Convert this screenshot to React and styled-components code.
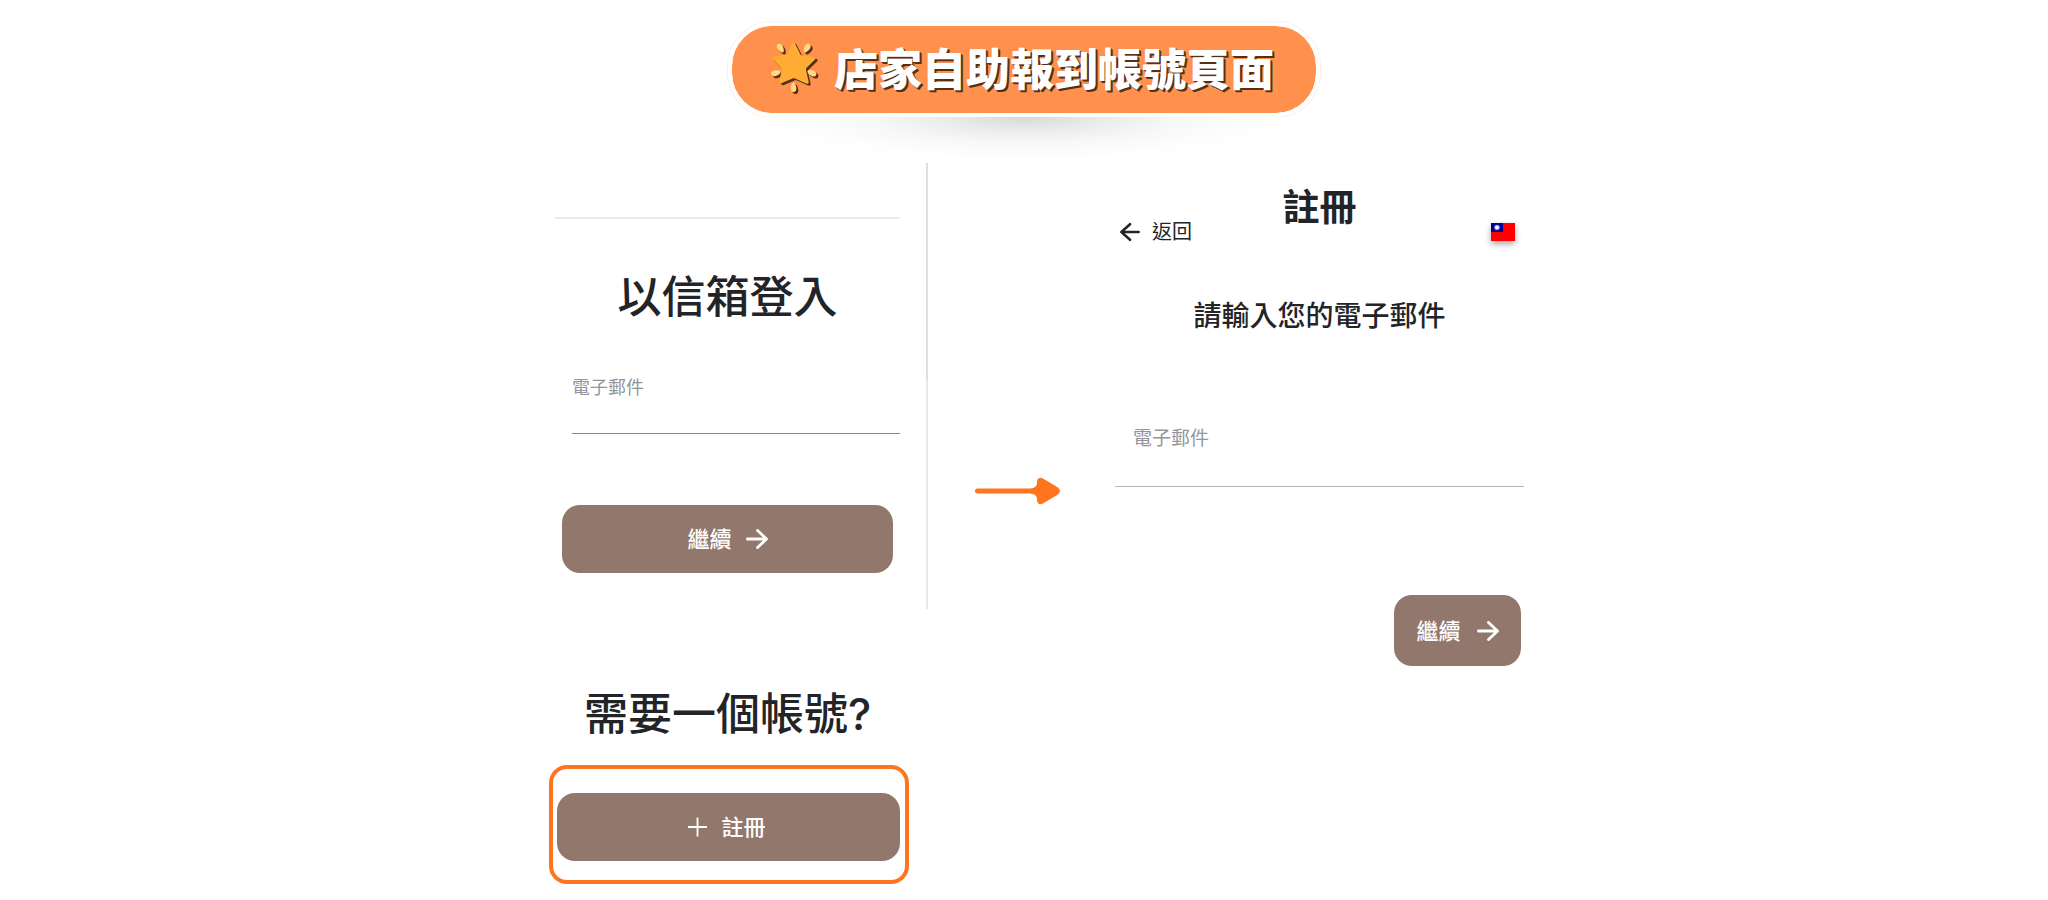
import React, { useState } from 'react'
import styled, { createGlobalStyle } from 'styled-components'

const GlobalStyle = createGlobalStyle`
* {
    box-sizing: border-box;
}
body {
    margin: 0;
    background: #fff;
    color: #222428;
    font-family: "Inter", "Noto Sans CJK TC", sans-serif;
}
h1, h2, h3 {
    margin: 0;
    text-align: center;
}
`
const Page = styled.div`
display: flex;
flex-direction: column;
align-items: center;
padding: 22px 16px 16px;
`
const Banner = styled.header`
position: relative;
display: flex;
align-items: center;
justify-content: center;
gap: 10px;
width: 592px;
max-width: 100%;
height: 95px;
padding-right: 4px;
border: 4px solid #fff;
border-radius: 44px;
background: #ff914d;
background-clip: padding-box;
box-shadow: 0 0 0 1px #fff0e6;
&::after {
    content: "";
    position: absolute;
    top: 91px;
    left: 32px;
    right: 32px;
    height: 44px;
    background: radial-gradient(ellipse 50% 100% at 50% 0, #d8d8d9, #ebebec 30%, #f8f8f8 60%, #fdfdfd 85%, #fff);
}
`
const BannerTitle = styled.h1`
font-size: 44px;
line-height: 60px;
font-weight: 900;
color: #fff;
text-shadow: 1px 1px 0 #54301a, 2px 2px 0 #54301a;
`
const Flow = styled.main`
display: flex;
align-items: flex-start;
width: 100%;
max-width: 1000px;
margin-top: 46px;
padding-left: 25px;
`
const LoginPanel = styled.section`
display: flex;
flex-direction: column;
width: 360px;
padding-top: 54px;
`
const Rule = styled.hr`
width: auto;
height: 2px;
margin: 0 9px 48px 6px;
border: 0;
background: #ececee;
`
const Heading = styled.h2`
padding-right: 3px;
font-size: 44px;
line-height: 60px;
font-weight: 500;
`
const LoginForm = styled.form`
display: flex;
flex-direction: column;
padding: 49px 16px 111px 13px;
`
const LoginField = styled.div`
margin: 0 -7px 71px 10px;
`
const Label = styled.label`
display: block;
padding-left: ${props => props.$indent || 0}px;
font-size: ${props => props.$size}px;
line-height: 24px;
color: #93959d;
`
const Input = styled.input`
display: block;
width: 100%;
height: ${props => props.$height}px;
padding: 0 ${props => props.$indent || 0}px;
border: 0;
border-bottom: 1px solid ${props => props.$line};
background: transparent;
font: inherit;
font-size: 18px;
outline: none;
`
const Button = styled.button`
display: flex;
align-items: center;
justify-content: center;
gap: ${props => props.$compact ? 16 : 14}px;
width: ${props => props.$compact ? "127px" : "100%"};
height: ${props => props.$compact ? 71 : 68}px;
padding: 0;
border: 0;
border-radius: 18px;
background: #92776d;
color: #fff;
font: inherit;
font-size: 22px;
line-height: 32px;
font-weight: 500;
cursor: pointer;
`
const Highlight = styled.div`
margin-top: 21px;
padding: 24px 5px 19px 4px;
border: 4px solid #ff751f;
border-radius: 18px;
button {
    padding-right: 3px;
}
`
const Divider = styled.div`
width: 2px;
height: 446px;
margin-left: 17px;
background: linear-gradient(#dcdfe5 216px, #e6e8ef 216px);
`
const StepArrow = styled.svg`
flex: none;
width: 86px;
height: 28px;
margin: 314px 54px 0 47px;
`
const RegisterPanel = styled.section`
display: flex;
flex-direction: column;
flex: 1;
padding-top: 17px;
`
const PanelHeader = styled.div`
display: grid;
grid-template-columns: 1fr auto 1fr;
align-items: end;
height: 64px;
`
const PanelTitle = styled.h2`
align-self: start;
font-size: 37px;
line-height: 56px;
font-weight: 700;
`
const BackButton = styled.button`
display: flex;
align-items: center;
justify-self: start;
gap: 12px;
height: 24px;
padding: 0 0 0 5px;
border: 0;
background: none;
color: inherit;
font: inherit;
font-size: 20px;
line-height: 24px;
cursor: pointer;
`
const LanguageButton = styled.button`
display: flex;
align-items: flex-start;
justify-self: end;
width: 24px;
height: 21px;
margin-right: 9px;
padding: 0;
border: 0;
background: none;
cursor: pointer;
svg {
    display: block;
    box-shadow: 0 3px 6px rgba(0,0,0,.35);
}
`
const Prompt = styled.h3`
margin-top: 52px;
font-size: 28px;
line-height: 40px;
font-weight: 500;
`
const RegisterForm = styled.form`
display: flex;
flex-direction: column;
align-items: flex-end;
gap: 108px;
padding-top: 91px;
button {
    margin-right: 3px;
}
`
const RegisterField = styled.div`
width: 100%;
`

const ray = "M0 -4.6C2.2 -4.6 3.2 -2.4 2.8 0C2.4 2.4 1.4 5 0 5C-1.4 5 -2.4 2.4 -2.8 0C-3.2 -2.4 -2.2 -4.6 0 -4.6Z"
const rays = [
    "translate(9.5 6) rotate(-32)",
    "translate(36 6) rotate(32)",
    "translate(4.8 31) rotate(-105)",
    "translate(41 31) rotate(115)",
    "translate(22.5 45.5) rotate(180)"
]

const StarShape = ({color, rayColor}) => (
    <g fill={color}>
        {rays.map((place, idx) => <path key={idx} d={ray} transform={place} fill={rayColor} />)}
        <path d="M21.1 1.2Q22.5 -1 23.9 1.2L29.5 12.4Q30 13.4 31.2 13.6L43 15Q46 15.6 44 17.6L35.6 25.8Q34.8 26.6 35 28L37.6 39.4Q38 42.6 35.2 41.4L24 36.4Q22.8 35.8 21.6 36.4L11 41Q8.2 42 8.8 39L10.4 27.6Q10.6 26.2 9.8 25.2L1.6 17Q0 15 2.6 14.4L14.4 12.8Q15.6 12.6 16.2 11.4Z" />
    </g>
)

const Star = () => (
    <svg width="54" height="54" viewBox="0 2 54 54" aria-hidden="true">
        <g transform="translate(3 3)"><StarShape color="#54301a" rayColor="#54301a" /></g>
        <g transform="translate(2 2)"><StarShape color="#54301a" rayColor="#54301a" /></g>
        <g transform="translate(1 1)"><StarShape color="#ffac33" rayColor="#ffd983" /></g>
    </svg>
)

const Arrow = ({back}) => (
    <svg width={back ? 20 : 22} height="20" viewBox="0 0 22 20" fill="none" stroke="currentColor" strokeWidth="2.8" strokeLinecap="round" strokeLinejoin="round" aria-hidden="true">
        <path d={back ? "M20.5 10H1.5M11 1.4L1.5 10L11 18.6" : "M1.4 10H20.5M11.5 1.4L20.5 10L11.5 18.6"} />
    </svg>
)

const Plus = () => (
    <svg width="19" height="20" viewBox="0 0 19 20" stroke="currentColor" strokeWidth="1.8" aria-hidden="true">
        <path d="M0 10H19M9.5 .5V19.5" />
    </svg>
)

const Flag = () => (
    <svg width="24" height="18" viewBox="0 0 24 18" aria-hidden="true">
        <rect width="24" height="18" fill="#fe0000" />
        <rect width="12" height="9" fill="#000095" />
        <circle cx="6" cy="4.5" r="2.8" fill="#8f94d2" />
        <circle cx="6" cy="4.5" r="1.8" fill="#fff" />
    </svg>
)

const App = () => {

    const [loginEmail, setLoginEmail] = useState("")
    const [registerEmail, setRegisterEmail] = useState("")

    const HandleSubmit = (e) => {
        e.preventDefault()
    }

    return <Page>
        <GlobalStyle />
        <Banner>
            <Star />
            <BannerTitle>店家自助報到帳號頁面</BannerTitle>
        </Banner>
        <Flow>
            <LoginPanel>
                <Rule />
                <Heading>以信箱登入</Heading>
                <LoginForm onSubmit={HandleSubmit}>
                    <LoginField>
                        <Label htmlFor="login-email" $size={18}>電子郵件</Label>
                        <Input id="login-email" type="email" $height={34} $line="#85868a" value={loginEmail} onChange={(e) => setLoginEmail(e.target.value)} />
                    </LoginField>
                    <Button type="submit">繼續<Arrow /></Button>
                </LoginForm>
                <Heading>需要一個帳號?</Heading>
                <Highlight>
                    <Button type="button"><Plus />註冊</Button>
                </Highlight>
            </LoginPanel>
            <Divider />
            <StepArrow viewBox="0 0 86 28" aria-hidden="true">
                <path d="M2.5 14H62" stroke="#ff751f" strokeWidth="5" strokeLinecap="round" />
                <path d="M56 11.5C60 11 62 9 62 5C62 1 65 0 68 1.4L83 10.6Q87 14 83 17.4L68 26.6C65 28 62 27 62 23C62 19 60 17 56 16.5Z" fill="#ff751f" />
            </StepArrow>
            <RegisterPanel>
                <PanelHeader>
                    <BackButton type="button"><Arrow back />返回</BackButton>
                    <PanelTitle>註冊</PanelTitle>
                    <LanguageButton type="button" aria-label="語言"><Flag /></LanguageButton>
                </PanelHeader>
                <Prompt>請輸入您的電子郵件</Prompt>
                <RegisterForm onSubmit={HandleSubmit}>
                    <RegisterField>
                        <Label htmlFor="register-email" $size={19} $indent={18}>電子郵件</Label>
                        <Input id="register-email" type="email" $height={36} $indent={18} $line="#b4b5b8" value={registerEmail} onChange={(e) => setRegisterEmail(e.target.value)} />
                    </RegisterField>
                    <Button type="submit" $compact>繼續<Arrow /></Button>
                </RegisterForm>
            </RegisterPanel>
        </Flow>
    </Page>
}

export default App
